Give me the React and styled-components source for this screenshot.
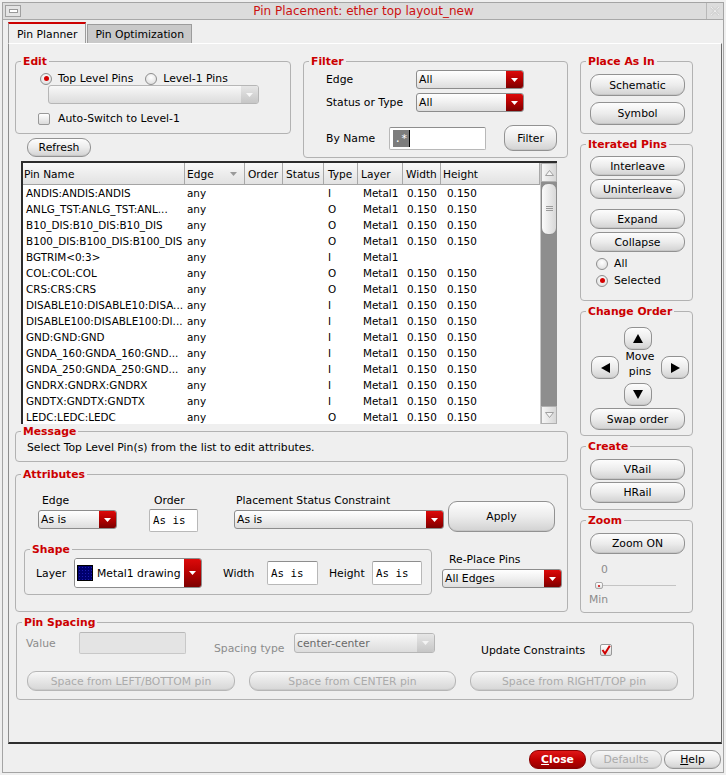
import React from 'react';
import styled, { createGlobalStyle } from 'styled-components';

const RED = '#cc0000';

const GlobalStyle = createGlobalStyle`
  html, body { margin: 0; padding: 0; background: #efefef; }
  body { font-family: 'DejaVu Sans', sans-serif; font-size: 10.8px; color: #000; }
  * { box-sizing: border-box; }
`;

const Window = styled.div`
  width: 726px;
  height: 775px;
  padding: 2px;
  background: #efefef;
`;

const Frame = styled.div`
  height: 100%;
  border: 1px solid #a4a4a4;
  display: flex;
  flex-direction: column;
`;

const TitleBar = styled.div`
  height: 17px;
  background: #dcdcdc;
  border-bottom: 1px solid #a8a8a8;
  display: flex;
  align-items: center;
  padding: 0 1px 0 2px;
`;

const MenuButton = styled.div`
  width: 16px;
  height: 12px;
  border: 1px solid #a0a0a0;
  background: #e4e4e4;
  display: flex;
  align-items: center;
  justify-content: center;
  &::after {
    content: '';
    width: 7px;
    height: 2px;
    border: 1px solid #999;
    background: #fff;
  }
`;

const Title = styled.div`
  flex: 1;
  text-align: center;
  color: #cc1010;
  font-size: 12px;
  line-height: 17px;
`;

const CloseIcon = styled.div`
  width: 16px;
  height: 16px;
  border-left: 1px solid #b8b8b8;
  display: flex;
  align-items: center;
  justify-content: center;
`;

const TabRow = styled.div`
  display: flex;
  align-items: flex-end;
  margin: 2px 0 0 5px;
  height: 21px;
`;

const Tab = styled.div`
  height: ${p => (p.$active ? 21 : 19)}px;
  padding: ${p => (p.$active ? '2px 8px 0' : '1px 7px 0')};
  display: flex;
  align-items: center;
  background: ${p => (p.$active ? '#efefef' : '#c9c9c9')};
  border: 1px solid #9c9c9c;
  border-bottom: none;
  border-top: ${p => (p.$active ? `2px solid ${RED}` : '1px solid #9c9c9c')};
  margin-left: ${p => (p.$active ? 0 : 1)}px;
`;

const Panel = styled.div`
  height: 701px;
  margin: 0 1px 0 5px;
  border-top: 1px solid #fff;
  border-left: 1px solid #8e8e8e;
  border-right: 1px solid #6a6a6a;
  border-bottom: 2px solid #2e2e2e;
  padding: 11px 0 0 6px;
  display: flex;
  flex-direction: column;
`;

const TopArea = styled.div`
  display: flex;
  gap: 12px;
  align-items: flex-start;
`;

const Column = styled.div`
  width: ${p => p.$w}px;
  display: flex;
  flex-direction: column;
  gap: ${p => p.$gap || 0}px;
`;

const Row = styled.div`
  display: flex;
  align-items: ${p => p.$align || 'flex-start'};
  gap: ${p => p.$gap || 0}px;
  margin-top: ${p => p.$mt || 0}px;
  padding-left: ${p => p.$pl || 0}px;
`;

const Group = styled.fieldset`
  margin: ${p => p.$m || 0};
  padding: ${p => p.$pad || 0};
  min-width: 0;
  border: 1px solid #b2b2b2;
  border-radius: 4px;
  height: ${p => p.$h}px;
  width: ${p => (p.$w ? `${p.$w}px` : 'auto')};
  flex-shrink: 0;
`;

const Legend = styled.legend`
  font-weight: bold;
  color: ${RED};
  padding: 0 2px;
  margin-left: 5px;
  line-height: 13px;
  font-size: 10.8px;
`;

const Label = styled.span`
  display: inline-block;
  line-height: 13px;
  white-space: nowrap;
  color: ${p => (p.$dim ? '#8c8c8c' : '#000')};
  width: ${p => (p.$w ? `${p.$w}px` : 'auto')};
  margin-top: ${p => p.$mt || 0}px;
  padding-left: ${p => p.$pl || 0}px;
  flex-shrink: 0;
`;

const Button = styled.button`
  font-family: 'DejaVu Sans', sans-serif;
  font-size: 10.8px;
  color: ${p => (p.disabled ? '#ababab' : '#000')};
  width: ${p => p.$w}px;
  height: ${p => p.$h || 20}px;
  margin-top: ${p => p.$mt || 0}px;
  margin-left: ${p => p.$ml || 0}px;
  padding: 0;
  border: 1px solid ${p => (p.disabled ? '#b6b6b6' : '#929292')};
  border-radius: 9px;
  background: ${p =>
    p.disabled
      ? 'linear-gradient(#f7f7f7, #e6e6e6 50%, #d6d6d6)'
      : 'linear-gradient(#fdfdfd, #ececec 50%, #d2d2d2)'};
  box-shadow: inset 0 -1px 0 rgba(0, 0, 0, 0.06);
  flex-shrink: 0;
  cursor: default;
`;

const CloseButton = styled(Button)`
  color: #fff;
  font-weight: bold;
  border-color: #8a0000;
  background: linear-gradient(#e01818, #c00000 50%, #960000);
`;

const ComboBox = styled.div`
  display: flex;
  width: ${p => p.$w}px;
  height: ${p => p.$h || 19}px;
  margin-top: ${p => p.$mt || 0}px;
  margin-left: ${p => p.$ml || 0}px;
  border: 1px solid ${p => (p.$off ? '#b6b6b6' : '#8c8c8c')};
  border-radius: 3px;
  overflow: hidden;
  background: ${p =>
    p.$off ? 'linear-gradient(#f8f8f8, #dcdcdc)' : 'linear-gradient(#ffffff, #f1f1f1 45%, #dddddd)'};
  flex-shrink: 0;
`;

const ComboValue = styled.span`
  flex: 1;
  display: flex;
  align-items: center;
  gap: 4px;
  padding-left: ${p => p.$pl || 2}px;
  white-space: nowrap;
  overflow: hidden;
  color: ${p => (p.$off ? '#6a6a6a' : '#000')};
  background: ${p => (p.$white ? '#fff' : 'transparent')};
`;

const ComboArrow = styled.span`
  width: ${p => p.$w || 17}px;
  display: flex;
  align-items: center;
  justify-content: center;
  background: ${p =>
    p.$off ? 'linear-gradient(#e6e6e6, #c6c6c6)' : 'linear-gradient(#dc0a0a, #b40000 50%, #7c0000)'};
`;

const Field = styled.div`
  width: ${p => (p.$w ? `${p.$w}px` : 'auto')};
  height: ${p => (p.$h ? `${p.$h}px` : 'auto')};
  margin-top: ${p => p.$mt || 0}px;
  margin-left: ${p => p.$ml || 0}px;
  background: ${p => (p.$off ? '#e4e4e4' : '#fff')};
  border: 1px solid ${p => (p.$off ? '#c8c8c8' : '#b8b8b8')};
  border-top-color: ${p => (p.$off ? '#b8b8b8' : '#8e8e8e')};
  border-radius: 2px;
  font-family: 'DejaVu Sans Mono', monospace;
  font-size: 10.8px;
  display: flex;
  align-items: center;
  padding-left: 3px;
  flex-shrink: 0;
`;

const Selected = styled.span`
  height: 17px;
  width: 17px;
  display: flex;
  align-items: center;
  justify-content: center;
  background: #7d7d7d;
  color: #fff;
  border-right: 1px solid #000;
`;

const Radio = styled.span`
  width: 12px;
  height: 12px;
  border-radius: 50%;
  border: 1px solid #8e8e8e;
  background: radial-gradient(circle at 50% 35%, #ffffff, #d8d8d8);
  display: inline-flex;
  align-items: center;
  justify-content: center;
  flex-shrink: 0;
  &::after {
    content: '';
    width: 5px;
    height: 5px;
    border-radius: 50%;
    background: #d40000;
    display: ${p => (p.$on ? 'block' : 'none')};
  }
`;

const Check = styled.span`
  width: 12px;
  height: 12px;
  border: 1px solid #989898;
  border-radius: 2px;
  background: linear-gradient(#ffffff, #dadada);
  display: inline-flex;
  align-items: center;
  justify-content: center;
  flex-shrink: 0;
  margin-top: ${p => p.$mt || 0}px;
`;

const Choice = styled.label`
  display: flex;
  align-items: center;
  gap: 6px;
  line-height: 13px;
`;

/* table */
const cols = [
  { name: 'Pin Name', w: 162, hp: 1, dp: 3 },
  { name: 'Edge', w: 60, hp: 2, dp: 2, sort: true },
  { name: 'Order', w: 38, hp: 3, dp: 3 },
  { name: 'Status', w: 41, hp: 3, dp: 3 },
  { name: 'Type', w: 34, hp: 4, dp: 4 },
  { name: 'Layer', w: 45, hp: 3, dp: 5 },
  { name: 'Width', w: 38, hp: 3, dp: 4 },
  { name: 'Height', w: 99, hp: 2, dp: 6 },
];
const gridCols = cols.map(c => `${c.w}px`).join(' ');

const pins = [
  ['ANDIS:ANDIS:ANDIS', 'I', true],
  ['ANLG_TST:ANLG_TST:ANL...', 'O', true],
  ['B10_DIS:B10_DIS:B10_DIS', 'O', true],
  ['B100_DIS:B100_DIS:B100_DIS', 'O', true],
  ['BGTRIM<0:3>', 'I', false],
  ['COL:COL:COL', 'O', true],
  ['CRS:CRS:CRS', 'O', true],
  ['DISABLE10:DISABLE10:DISA...', 'I', true],
  ['DISABLE100:DISABLE100:DI...', 'I', true],
  ['GND:GND:GND', 'I', true],
  ['GNDA_160:GNDA_160:GND...', 'I', true],
  ['GNDA_250:GNDA_250:GND...', 'I', true],
  ['GNDRX:GNDRX:GNDRX', 'I', true],
  ['GNDTX:GNDTX:GNDTX', 'I', true],
  ['LEDC:LEDC:LEDC', 'O', true],
];

const TableBox = styled.div`
  margin: 3px 0 0 6px;
  width: 536px;
  height: 263px;
  display: flex;
  border-top: 2px solid #2c2c2c;
  border-left: 2px solid #2c2c2c;
  background: #fff;
  flex-shrink: 0;
`;

const TableBody = styled.div`
  width: 517px;
  overflow: hidden;
  font-size: 10.4px;
`;

const HeaderRow = styled.div`
  display: grid;
  grid-template-columns: ${gridCols};
  height: 22px;
  background: linear-gradient(#f8f8f8, #e2e2e2);
  border-bottom: 1px solid #a4a4a4;
`;

const HeaderCell = styled.div`
  display: flex;
  align-items: center;
  justify-content: space-between;
  padding: 0 7px 0 ${p => p.$pad}px;
  border-right: 1px solid #a8a8a8;
  font-size: 10.6px;
  white-space: nowrap;
`;

const DataRow = styled.div`
  display: grid;
  grid-template-columns: ${gridCols};
  height: 16px;
  line-height: 16px;
`;

const DataCell = styled.div`
  padding-left: ${p => p.$pad}px;
  white-space: nowrap;
  overflow: hidden;
`;

const ScrollBar = styled.div`
  width: 17px;
  display: flex;
  flex-direction: column;
  background: #8e8e8e;
  border-left: 1px solid #c8c8c8;
`;

const ScrollArrow = styled.div`
  height: ${p => p.$h}px;
  background: linear-gradient(90deg, #f6f6f6, #d6d6d6);
  border: 1px solid #b0b0b0;
  display: flex;
  align-items: center;
  justify-content: center;
  margin-top: ${p => (p.$bottom ? 'auto' : 0)};
`;

const Thumb = styled.div`
  height: 52px;
  margin: 1px 0 0;
  border: 1px solid #8a8a8a;
  border-radius: 7px;
  background: linear-gradient(90deg, #fbfbfb, #d8d8d8);
  display: flex;
  align-items: center;
  justify-content: center;
`;

const Message = styled.div`
  padding: 3px 0 0 11px;
  line-height: 13px;
`;

const ArrowPad = styled.div`
  display: grid;
  grid-template-columns: 28px 42px 28px;
  grid-template-rows: 22px 34px 22px;
  margin: 9px 0 0 10px;
`;

const PadButton = styled(Button)`
  width: 28px;
  height: 23px;
  border-radius: 8px;
  grid-column: ${p => p.$col};
  grid-row: ${p => p.$row};
  justify-self: ${p => p.$js || 'stretch'};
  align-self: ${p => p.$as || 'start'};
  display: flex;
  align-items: center;
  justify-content: center;
`;

const MoveText = styled.div`
  grid-column: 2;
  grid-row: 2;
  text-align: center;
  line-height: 15px;
`;

const SliderTrack = styled.div`
  display: flex;
  align-items: center;
  margin: 6px 0 0 14px;
  width: 81px;
  height: 7px;
  &::after {
    content: '';
    flex: 1;
    height: 1px;
    background: #c4c4c4;
  }
`;

const SliderHandle = styled.span`
  width: 8px;
  height: 7px;
  border: 1px solid #a8a8a8;
  border-radius: 2px;
  background: linear-gradient(#fff, #ddd);
  display: flex;
  align-items: center;
  justify-content: center;
  &::after {
    content: '';
    width: 2px;
    height: 2px;
    background: #d00000;
    border-radius: 50%;
  }
`;

const Swatch = styled.span`
  width: 16px;
  height: 16px;
  border: 1px solid #000;
  background-color: #00006e;
  background-image: radial-gradient(#1c1cb0 0.5px, transparent 0.7px);
  background-size: 3px 3px;
  flex-shrink: 0;
`;

const Footer = styled.div`
  display: flex;
  justify-content: flex-end;
  padding: 5px 2px 0 0;
  gap: 4px;
`;

const Under = styled.span`
  text-decoration: underline;
`;

const Tri = ({ dir = 'down', color = '#fff', w = 8, h = 5 }) => {
  const pts = {
    down: `0,0 ${w},0 ${w / 2},${h}`,
    up: `${w / 2},0 ${w},${h} 0,${h}`,
    left: `0,${h / 2} ${w},0 ${w},${h}`,
    right: `0,0 ${w},${h / 2} 0,${h}`,
  }[dir];
  return (
    <svg width={w} height={h} viewBox={`0 0 ${w} ${h}`}>
      <polygon points={pts} fill={color} />
    </svg>
  );
};

const Combo = ({ w, h, value, off, mt, ml, children }) => (
  <ComboBox $w={w} $h={h} $off={off} $mt={mt} $ml={ml}>
    <ComboValue $off={off} $white={!!children}>
      {children}
      {value}
    </ComboValue>
    <ComboArrow $off={off}>
      <Tri color={off ? '#f4f4f4' : '#fff'} w={7} h={4} />
    </ComboArrow>
  </ComboBox>
);

export default function App() {
  return (
    <>
      <GlobalStyle />
      <Window>
        <Frame>
          <TitleBar>
            <MenuButton />
            <Title>Pin Placement: ether top layout_new</Title>
            <CloseIcon>
              <svg width="12" height="12" viewBox="0 0 12 12">
                <path d="M2 2 L10 10 M10 2 L2 10" stroke="#d2d2d2" strokeWidth="3" />
                <path d="M2 2 L10 10 M10 2 L2 10" stroke="#fafafa" strokeWidth="1" strokeDasharray="1 1" />
              </svg>
            </CloseIcon>
          </TitleBar>

          <TabRow>
            <Tab $active>Pin Planner</Tab>
            <Tab>Pin Optimization</Tab>
          </TabRow>

          <Panel>
            <TopArea>
              <Column $w={553}>
                <Row $gap={12}>
                  <Column $w={276}>
                    <Group $h={79}>
                      <Legend>Edit</Legend>
                      <Row $pl={24} $mt={4} $gap={12}>
                        <Choice>
                          <Radio $on />
                          Top Level Pins
                        </Choice>
                        <Choice>
                          <Radio />
                          Level-1 Pins
                        </Choice>
                      </Row>
                      <ComboBox $w={211} $off $ml={32} $mt={0}>
                        <ComboValue $off />
                        <ComboArrow $off>
                          <Tri color="#f8f8f8" w={7} h={4} />
                        </ComboArrow>
                      </ComboBox>
                      <Row $pl={22} $mt={8}>
                        <Choice>
                          <Check />
                          <span style={{ marginLeft: 2 }}>Auto-Switch to Level-1</span>
                        </Choice>
                      </Row>
                    </Group>
                    <Button $w={64} $h={19} $mt={4} $ml={12}>
                      Refresh
                    </Button>
                  </Column>

                  <Group $h={103} $w={265}>
                    <Legend>Filter</Legend>
                    <Row $pl={22} $mt={2} $align="center">
                      <Label $w={90}>Edge</Label>
                      <Combo w={108} value="All" />
                    </Row>
                    <Row $pl={22} $mt={4} $align="center">
                      <Label $w={90}>Status or Type</Label>
                      <Combo w={108} value="All" />
                    </Row>
                    <Row $pl={22} $mt={13} $align="center">
                      <Label $w={63}>By Name</Label>
                      <Field $w={97} $h={23}>
                        <Selected>.*</Selected>
                      </Field>
                      <Button $w={53} $h={26} $ml={18}>
                        Filter
                      </Button>
                    </Row>
                  </Group>
                </Row>

                <TableBox>
                  <TableBody>
                    <HeaderRow>
                      {cols.map(c => (
                        <HeaderCell key={c.name} $pad={c.hp}>
                          {c.name}
                          {c.sort && <Tri color="#9a9a9a" w={7} h={4} />}
                        </HeaderCell>
                      ))}
                    </HeaderRow>
                    {pins.map(([name, type, sized]) => (
                      <DataRow key={name}>
                        <DataCell $pad={cols[0].dp}>{name}</DataCell>
                        <DataCell $pad={cols[1].dp}>any</DataCell>
                        <DataCell $pad={cols[2].dp} />
                        <DataCell $pad={cols[3].dp} />
                        <DataCell $pad={cols[4].dp}>{type}</DataCell>
                        <DataCell $pad={cols[5].dp}>Metal1</DataCell>
                        <DataCell $pad={cols[6].dp}>{sized ? '0.150' : ''}</DataCell>
                        <DataCell $pad={cols[7].dp}>{sized ? '0.150' : ''}</DataCell>
                      </DataRow>
                    ))}
                  </TableBody>
                  <ScrollBar>
                    <ScrollArrow $h={19}>
                      <svg width="9" height="6" viewBox="0 0 9 6">
                        <polygon points="4.5,0.5 8.5,5.5 0.5,5.5" fill="#f4f4f4" stroke="#a0a0a0" />
                      </svg>
                    </ScrollArrow>
                    <Thumb>
                      <svg width="7" height="6" viewBox="0 0 7 6">
                        <path d="M0 0.5H7M0 2.5H7M0 4.5H7" stroke="#9a9a9a" />
                      </svg>
                    </Thumb>
                    <ScrollArrow $h={18} $bottom>
                      <svg width="9" height="6" viewBox="0 0 9 6">
                        <polygon points="0.5,0.5 8.5,0.5 4.5,5.5" fill="#f4f4f4" stroke="#a0a0a0" />
                      </svg>
                    </ScrollArrow>
                  </ScrollBar>
                </TableBox>

                <Group $h={37} $m="1px 0 0 0">
                  <Legend>Message</Legend>
                  <Message>Select Top Level Pin(s) from the list to edit attributes.</Message>
                </Group>

                <Group $h={144} $m="6px 0 0 0">
                  <Legend>Attributes</Legend>
                  <Row $pl={22} $mt={13}>
                    <Column $w={79} $gap={3}>
                      <Label $pl={4}>Edge</Label>
                      <Combo w={79} value="As is" />
                    </Column>
                    <Column $w={49} $gap={2} style={{ marginLeft: 32 }}>
                      <Label $pl={5}>Order</Label>
                      <Field $w={49} $h={23}>As is</Field>
                    </Column>
                    <Column $w={210} $gap={3} style={{ marginLeft: 36 }}>
                      <Label $pl={2}>Placement Status Constraint</Label>
                      <Combo w={210} value="As is" />
                    </Column>
                    <Button $w={107} $h={31} $mt={7} $ml={4}>
                      Apply
                    </Button>
                  </Row>
                  <Row $pl={8} $mt={11}>
                    <Group $h={52} $w={408}>
                      <Legend>Shape</Legend>
                      <Row $pl={11} $mt={2} $align="center">
                        <Label $w={38}>Layer</Label>
                        <ComboBox $w={128} $h={30}>
                          <ComboValue $white $pl={2}>
                            <Swatch />
                            Metal1 drawing
                          </ComboValue>
                          <ComboArrow>
                            <Tri w={7} h={4} />
                          </ComboArrow>
                        </ComboBox>
                        <Label $w={44} style={{ marginLeft: 21 }}>
                          Width
                        </Label>
                        <Field $w={51} $h={24}>As is</Field>
                        <Label $w={43} style={{ marginLeft: 11 }}>
                          Height
                        </Label>
                        <Field $w={50} $h={24}>As is</Field>
                      </Row>
                    </Group>
                    <Column $w={120} $gap={3} style={{ marginLeft: 10, marginTop: 10 }}>
                      <Label $pl={7}>Re-Place Pins</Label>
                      <Combo w={120} value="All Edges" />
                    </Column>
                  </Row>
                </Group>
              </Column>

              <Column $w={113} $gap={4}>
                <Group $h={79}>
                  <Legend>Place As In</Legend>
                  <Button $w={95} $h={22} $mt={6} $ml={9}>
                    Schematic
                  </Button>
                  <Button $w={95} $h={23} $mt={6} $ml={9}>
                    Symbol
                  </Button>
                </Group>

                <Group $h={163}>
                  <Legend>Iterated Pins</Legend>
                  <Button $w={95} $h={20} $mt={5} $ml={9}>
                    Interleave
                  </Button>
                  <Button $w={95} $h={20} $mt={3} $ml={9}>
                    Uninterleave
                  </Button>
                  <Button $w={95} $h={20} $mt={10} $ml={9}>
                    Expand
                  </Button>
                  <Button $w={95} $h={20} $mt={3} $ml={9}>
                    Collapse
                  </Button>
                  <Row $pl={15} $mt={5}>
                    <Choice>
                      <Radio />
                      All
                    </Choice>
                  </Row>
                  <Row $pl={15} $mt={4}>
                    <Choice>
                      <Radio $on />
                      Selected
                    </Choice>
                  </Row>
                </Group>

                <Group $h={131}>
                  <Legend>Change Order</Legend>
                  <ArrowPad>
                    <PadButton $col={2} $row={1} $js="start" style={{ marginLeft: 5 }}>
                      <Tri dir="up" color="#000" w={10} h={9} />
                    </PadButton>
                    <PadButton $col={1} $row={2} $as="end" style={{ marginBottom: 4 }}>
                      <Tri dir="left" color="#000" w={9} h={10} />
                    </PadButton>
                    <MoveText>
                      Move
                      <br />
                      pins
                    </MoveText>
                    <PadButton $col={3} $row={2} $as="end" style={{ marginBottom: 4 }}>
                      <Tri dir="right" color="#000" w={9} h={10} />
                    </PadButton>
                    <PadButton $col={2} $row={3} $js="start" style={{ marginLeft: 5 }}>
                      <Tri dir="down" color="#000" w={10} h={9} />
                    </PadButton>
                  </ArrowPad>
                  <Button $w={95} $h={22} $mt={3} $ml={9}>
                    Swap order
                  </Button>
                </Group>

                <Group $h={70}>
                  <Legend>Create</Legend>
                  <Button $w={95} $h={21} $mt={6} $ml={9}>
                    VRail
                  </Button>
                  <Button $w={95} $h={21} $mt={2} $ml={9}>
                    HRail
                  </Button>
                </Group>

                <Group $h={99}>
                  <Legend>Zoom</Legend>
                  <Button $w={95} $h={21} $mt={6} $ml={9}>
                    Zoom ON
                  </Button>
                  <Row $pl={20} $mt={9}>
                    <Label $dim>0</Label>
                  </Row>
                  <SliderTrack>
                    <SliderHandle />
                  </SliderTrack>
                  <Row $pl={8} $mt={4}>
                    <Label $dim>Min</Label>
                  </Row>
                </Group>
              </Column>
            </TopArea>

            <Group $h={84} $w={678} $m="3px 0 0 1px">
              <Legend>Pin Spacing</Legend>
              <Row $pl={9}>
                <Label $dim $w={53} $mt={8}>
                  Value
                </Label>
                <Field $w={107} $h={22} $off $mt={3} />
                <Label $dim $w={80} $mt={13} style={{ marginLeft: 28 }}>
                  Spacing type
                </Label>
                <Combo w={141} h={20} value="center-center" off mt={4} />
                <Label $w={119} $mt={15} style={{ marginLeft: 46 }}>
                  Update Constraints
                </Label>
                <Check $mt={15}>
                  <svg width="10" height="10" viewBox="0 0 10 10">
                    <path d="M1.5 5 L4 8.5 L8.8 0.8" stroke="#d00000" strokeWidth="2" fill="none" />
                  </svg>
                </Check>
              </Row>
              <Row $pl={10} $mt={14} $gap={14}>
                <Button $w={208} disabled>
                  Space from LEFT/BOTTOM pin
                </Button>
                <Button $w={207} disabled>
                  Space from CENTER pin
                </Button>
                <Button $w={208} disabled>
                  Space from RIGHT/TOP pin
                </Button>
              </Row>
            </Group>
          </Panel>

          <Footer>
            <CloseButton $w={57} $h={19} $mt={1}>
              <Under>C</Under>lose
            </CloseButton>
            <Button $w={72} $h={19} $mt={1} disabled>
              Defaults
            </Button>
            <Button $w={57} $h={19} $mt={1} style={{ marginLeft: -2 }}>
              <Under>H</Under>elp
            </Button>
          </Footer>
        </Frame>
      </Window>
    </>
  );
}
